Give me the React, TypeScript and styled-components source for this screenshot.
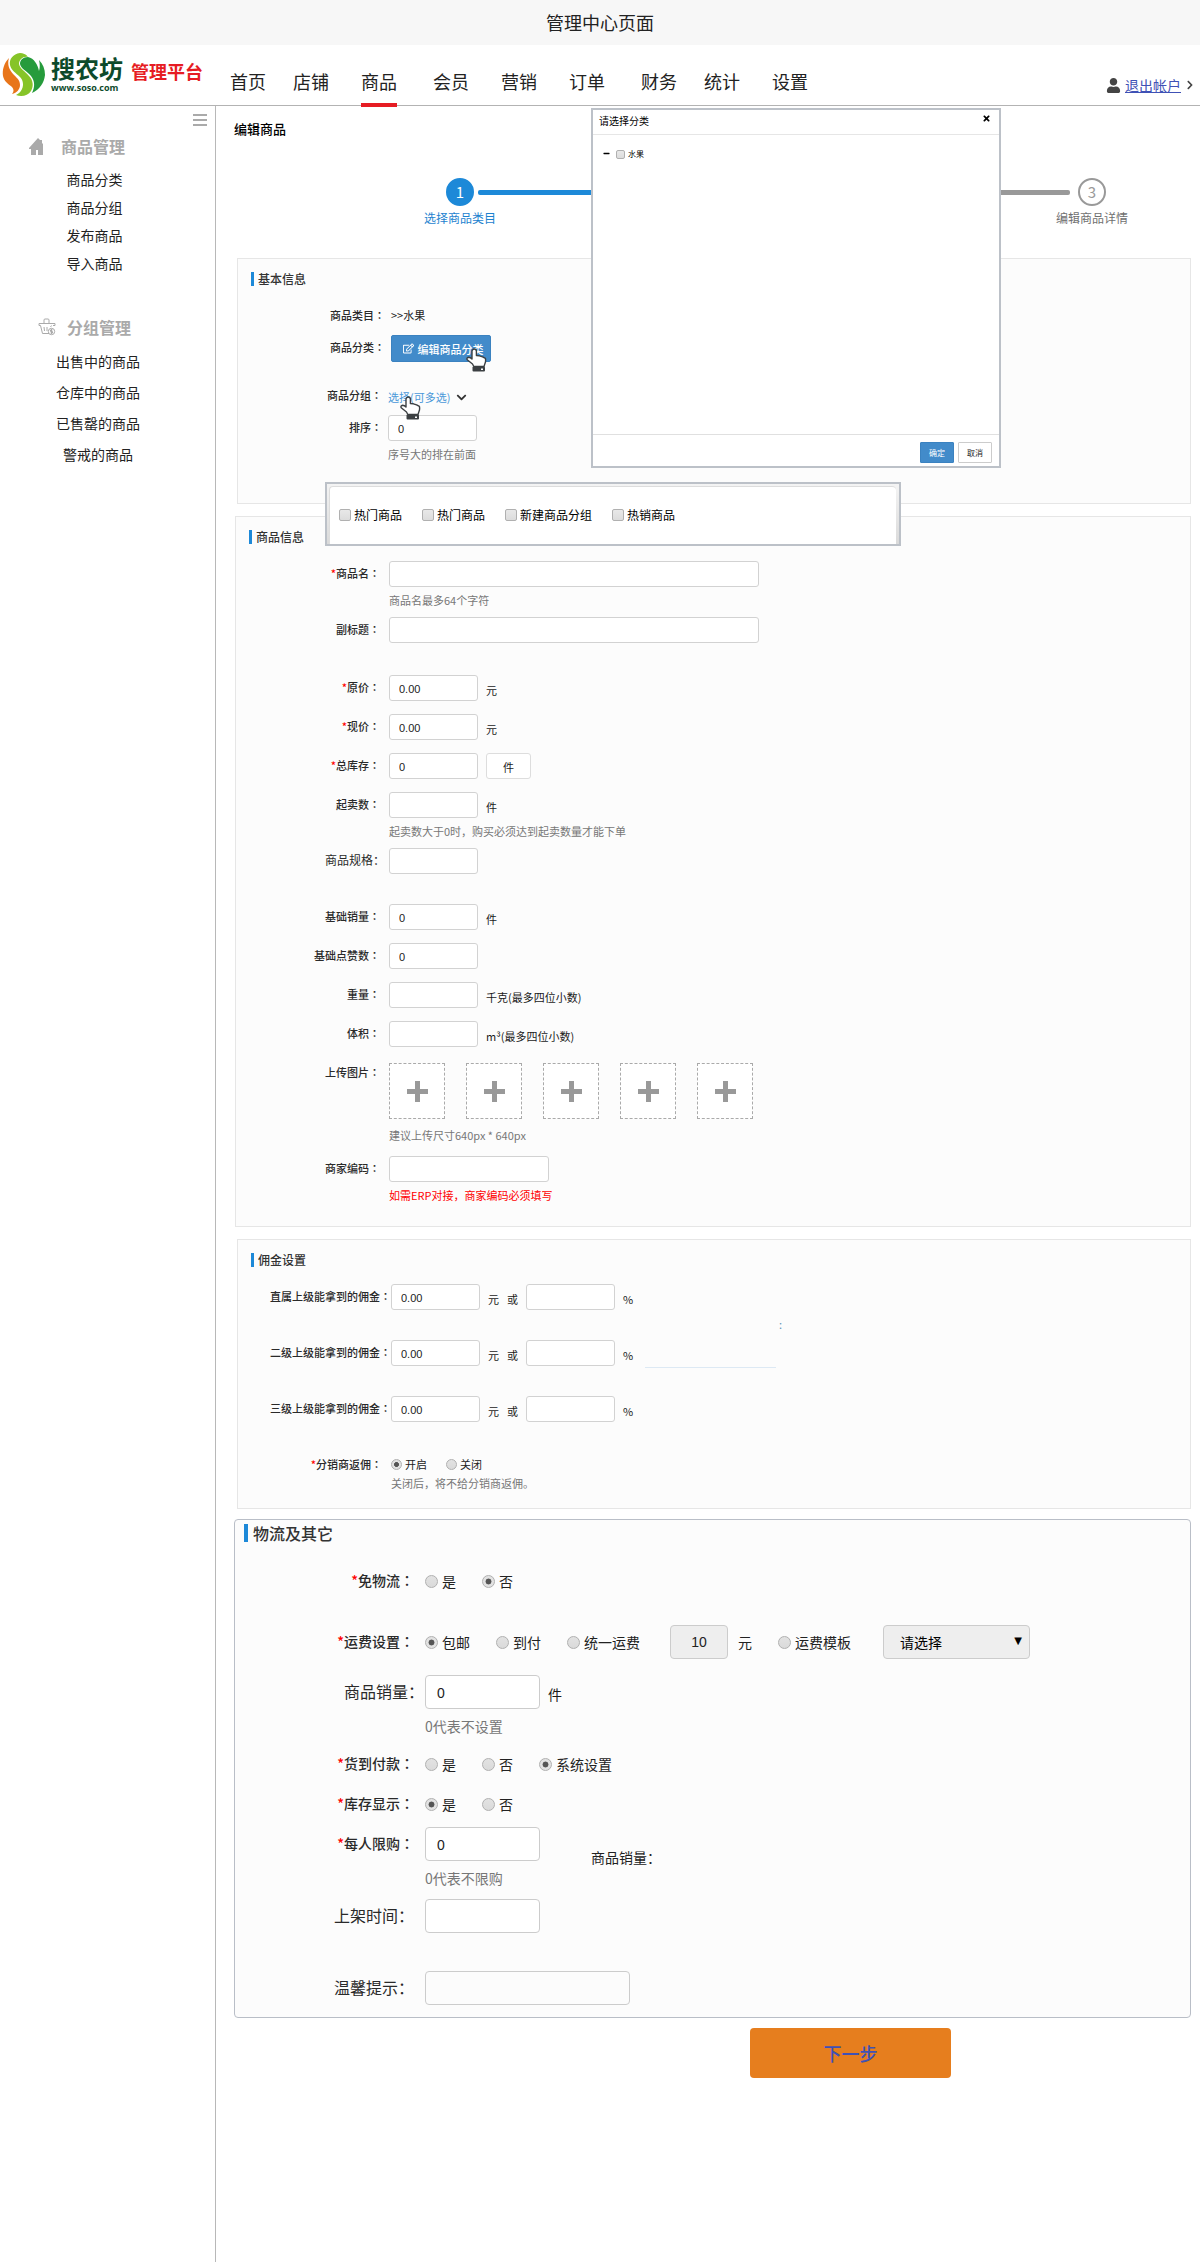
import React, { useId, useState } from "react";
import styled, { createGlobalStyle } from "styled-components";
import { FaChevronDown, FaChevronRight, FaMinus, FaRegEdit, FaTimes, FaUser } from "react-icons/fa";

const GlobalStyle = createGlobalStyle`
  * { box-sizing: border-box; }
  body {
    margin: 0;
    background: #fff;
    color: #222;
    font-family: "Noto Sans CJK SC", sans-serif;
    font-size: 11px;
  }
  button, input, select { font: inherit; color: inherit; margin: 0; }
  h1, h2, ul, p { margin: 0; padding: 0; }
  ul { list-style: none; }
`;

/* ---------- page frame ---------- */

const Page = styled.div`
  display: flex;
  flex-direction: column;
  min-height: 100vh;
`;

const TopBar = styled.div`
  height: 45px;
  line-height: 44px;
  background: #f7f7f7;
  text-align: center;
  font-size: 18px;
`;

const Header = styled.header`
  display: flex;
  height: 61px;
  border-bottom: 1px solid #b3b3b3;
`;

const Brand = styled.a`
  display: flex;
  align-items: flex-start;
  width: 230px;
  padding: 8px 0 0 2px;
  text-decoration: none;
`;

const BrandName = styled.span`
  display: flex;
  flex-direction: column;
  margin-left: 6px;
  color: #0d4a2b;
  font-weight: 700;
`;

const BrandTitle = styled.span`
  font-size: 24px;
  line-height: 30px;
`;

const BrandDomain = styled.span`
  font-family: "Open Sans", sans-serif;
  font-size: 9px;
  line-height: 10px;
`;

const BrandTag = styled.span`
  margin-left: 8px;
  color: #e61c23;
  font-size: 18px;
  font-weight: 700;
  line-height: 36px;
`;

const Nav = styled.nav`
  display: flex;
`;

const NavLink = styled.a<{ $active?: boolean; $space: number }>`
  height: 62px;
  margin-left: ${(p) => p.$space}px;
  padding-top: 22px;
  border-bottom: 4px solid ${(p) => (p.$active ? "#e61c23" : "transparent")};
  color: #222;
  font-size: 18px;
  line-height: 28px;
  text-decoration: none;
`;

const Account = styled.div`
  display: flex;
  align-items: center;
  gap: 4px;
  margin-left: auto;
  padding: 20px 5px 0 0;
  color: #444;
`;

const LogoutLink = styled.a`
  color: #3f51b5;
  font-size: 14px;
  line-height: 20px;
`;

const Body = styled.div`
  display: flex;
  flex: 1;
`;

/* ---------- sidebar ---------- */

const Sidebar = styled.aside`
  flex: none;
  width: 216px;
  border-right: 1px solid #b8b8b8;
`;

const MenuToggle = styled.button`
  display: flex;
  flex-direction: column;
  gap: 3px;
  width: 14px;
  margin: 8px 8px 8px auto;
  padding: 0;
  border: 0;
  background: none;
`;

const ToggleBar = styled.span`
  height: 2px;
  background: #aaa;
`;

const GroupTitle = styled.h2<{ $indent: number; $space: number }>`
  display: flex;
  align-items: center;
  gap: ${(p) => p.$space}px;
  padding-left: ${(p) => p.$indent}px;
  color: #aaa;
  font-size: 16px;
  font-weight: 700;
  line-height: 24px;
`;

const GroupList = styled.ul<{ $pitch: number; $right: number }>`
  padding: 7px ${(p) => p.$right}px 38px 0;
  font-size: 14px;
  line-height: ${(p) => p.$pitch}px;
  text-align: center;
`;

const SideLink = styled.a`
  color: #222;
  text-decoration: none;
`;

/* ---------- content ---------- */

const Main = styled.main`
  position: relative;
  flex: 1;
  min-width: 0;
  padding: 13px 9px 40px 18px;
`;

const PageTitle = styled.h1`
  color: #000;
  font-size: 13px;
  font-weight: 500;
  line-height: 20px;
`;

const Stepper = styled.ol`
  display: flex;
  align-items: flex-start;
  margin: 39px 63px 30px 190px;
  padding: 0;
  list-style: none;
`;

const Step = styled.li<{ $active?: boolean }>`
  display: flex;
  flex-direction: column;
  align-items: center;
  width: 72px;
  color: ${(p) => (p.$active ? "#1d82cf" : "#707070")};
  font-size: 12px;
  line-height: 20px;
`;

const StepDot = styled.span<{ $active?: boolean }>`
  width: 28px;
  height: 28px;
  margin-bottom: 2px;
  border: 2px solid ${(p) => (p.$active ? "#1d89d8" : "#999")};
  border-radius: 50%;
  background: ${(p) => (p.$active ? "#1d89d8" : "#fff")};
  color: ${(p) => (p.$active ? "#fff" : "#999")};
  font-size: 15px;
  line-height: 24px;
  text-align: center;
`;

const StepLine = styled.li<{ $active?: boolean }>`
  flex: 1;
  height: 5px;
  margin: 12px ${(p) => (p.$active ? "0 0 -18px" : "-14px 0 0")};
  border-radius: 2px;
  background: ${(p) => (p.$active ? "#1d89d8" : "#999")};
`;

const Panel = styled.section<{ $left?: number; $bottom?: number }>`
  position: relative;
  margin: 0 0 12px ${(p) => p.$left ?? 3}px;
  padding: 10px 0 ${(p) => p.$bottom ?? 18}px;
  border: 1px solid #e6e6e6;
  background: #fcfcfc;
`;

const PanelTitle = styled.h2`
  display: flex;
  align-items: center;
  gap: 4px;
  margin: 0 0 14px 13px;
  color: #333;
  font-size: 12px;
  font-weight: 500;
  line-height: 20px;

  &::before {
    content: "";
    width: 3px;
    height: 14px;
    background: #1d89d8;
  }
`;

const FramedPanel = styled.section`
  margin-top: -2px;
  padding: 4px 0 12px;
  border: 1px solid #b9bec7;
  border-radius: 4px;
  background: #fcfcfc;
  font-size: 14px;
`;

const FramedTitle = styled(PanelTitle)`
  gap: 5px;
  margin: 0 0 22px 9px;
  font-size: 16px;
  line-height: 18px;

  &::before {
    width: 4px;
    height: 18px;
  }
`;

const Row = styled.div<{ $label?: number; $space?: number; $gap?: number }>`
  display: grid;
  grid-template-columns: ${(p) => p.$label ?? 144}px minmax(0, 1fr);
  column-gap: ${(p) => p.$space ?? 9}px;
  margin-bottom: ${(p) => p.$gap ?? 13}px;
`;

const Label = styled.label<{ $size?: number }>`
  color: #2a2a2a;
  font-size: ${(p) => p.$size ?? 11}px;
  font-weight: ${(p) => (p.$size ? 400 : 500)};
  line-height: 24px;
  text-align: right;
  white-space: nowrap;
`;

const BigLabel = styled(Label)`
  font-size: ${(p) => p.$size ?? 14}px;
  line-height: 32px;
`;

const Star = styled.span`
  color: #f00;
`;

/* The Traditional Chinese face centres the full-width colon in its cell. */
const MidColon = styled.span`
  font-family: "Noto Sans CJK TC", sans-serif;
`;

const Controls = styled.div<{ $height?: number }>`
  display: flex;
  align-items: center;
  gap: 8px;
  min-height: ${(p) => p.$height ?? 26}px;
`;

const TextInput = styled.input<{ $width?: number }>`
  width: ${(p) => p.$width ?? 89}px;
  height: 26px;
  padding: 2px 9px 0;
  border: 1px solid #d2d2d2;
  border-radius: 3px;
  background: #fff;
  color: #222;
  font-family: "Liberation Sans", sans-serif;
  font-size: 11px;
`;

const BigInput = styled(TextInput)<{ $plain?: boolean }>`
  height: 34px;
  padding: 2px 11px 0;
  border-color: #ccc;
  border-radius: 4px;
  background: ${(p) => (p.$plain ? "#fcfcfc" : "#fff")};
  font-size: 14px;
`;

const FeeInput = styled(BigInput)`
  margin: 0 2px 0 22px;
  padding: 0;
  background: #eee;
  text-align: center;
`;

const Unit = styled.span`
  padding-top: 3px;
  color: #1a1a1a;
  line-height: 20px;
`;

const Hint = styled.p<{ $line?: number; $color?: string }>`
  grid-column: 2;
  color: ${(p) => p.$color ?? "#777"};
  line-height: ${(p) => p.$line ?? 26}px;
`;

const UnitButton = styled.button`
  width: 45px;
  height: 26px;
  padding: 2px 0 0;
  border: 1px solid #ddd;
  border-radius: 3px;
  background: #fff;
  line-height: 20px;
`;

const EditButton = styled.button`
  display: flex;
  align-items: center;
  justify-content: center;
  gap: 4px;
  width: 100px;
  height: 27px;
  padding: 0 0 0 4px;
  border: 1px solid #3b82c0;
  border-radius: 2px;
  background: #428bca;
  color: #fff;
  font-weight: 500;
`;

const PickLink = styled.a`
  color: #4a98d9;
  line-height: 20px;
  text-decoration: none;
`;

const PickControls = styled(Controls)`
  gap: 6px;
  padding-top: 4px;
  color: #333;
`;

const Pointed = styled.span`
  position: relative;
  display: inline-flex;
`;

const HandSpot = styled.span<{ $x: number; $y: number }>`
  position: absolute;
  left: ${(p) => p.$x}px;
  top: ${(p) => p.$y}px;
  z-index: 1;
  line-height: 0;
  pointer-events: none;
`;

const Choice = styled.label<{ $space?: number }>`
  display: flex;
  align-items: center;
  gap: ${(p) => p.$space ?? 3}px;
  white-space: nowrap;
`;

const Radio = styled.input<{ $size?: number }>`
  appearance: none;
  width: ${(p) => p.$size ?? 11}px;
  height: ${(p) => p.$size ?? 11}px;
  border: 1px solid #b0b0b0;
  border-radius: 50%;
  background: linear-gradient(#e2e2e2, #dadada);

  &:checked {
    background: radial-gradient(circle, #555 0 34%, #e2e2e2 42%);
  }
`;

const Check = styled.input<{ $size?: number }>`
  appearance: none;
  width: ${(p) => p.$size ?? 12}px;
  height: ${(p) => p.$size ?? 12}px;
  border: 1px solid #b0b0b0;
  border-radius: 2px;
  background: linear-gradient(#e8e8e8, #dcdcdc);

  &:checked {
    background: #428bca;
  }
`;

const Choices = styled(Controls)<{ $between: number }>`
  gap: ${(p) => p.$between}px;
`;

const UploadList = styled.div`
  display: flex;
  gap: 21px;
  padding: 3px 0;
`;

const UploadButton = styled.button`
  display: grid;
  place-items: center;
  width: 56px;
  height: 56px;
  padding: 0;
  border: 1px dashed #aaa;
  background: #fff;
`;

const SideMark = styled.div`
  position: absolute;
  left: 407px;
  top: 77px;
  width: 137px;
  height: 51px;
  color: #5b93b8;
  line-height: 14px;
  text-align: right;

  &::after {
    content: "";
    display: block;
    width: 131px;
    height: 1px;
    margin-top: 36px;
    background: #dde9f4;
  }
`;

const SelectBox = styled.span`
  position: relative;
  margin-left: 24px;
`;

const Select = styled.select`
  appearance: none;
  width: 147px;
  height: 34px;
  padding: 0 16px;
  border: 1px solid #ccc;
  border-radius: 4px;
  background: #eee;
  color: #000;
`;

const SelectArrow = styled.span`
  position: absolute;
  right: 8px;
  top: 6px;
  color: #000;
  font-family: "DejaVu Sans", sans-serif;
  font-size: 10px;
  line-height: 20px;
  pointer-events: none;
`;

const SalesNote = styled.span`
  margin: 26px 0 0 43px;
  line-height: 20px;
`;

const LimitControls = styled(Controls)`
  height: 34px;
`;

const NextButton = styled.button`
  display: block;
  width: 201px;
  height: 50px;
  margin: 10px 0 0 516px;
  border: 0;
  border-radius: 4px;
  background: #e67e1e;
  color: #3f51b5;
  font-size: 18px;
  font-weight: 500;
`;

/* ---------- overlays ---------- */

const Dialog = styled.div`
  position: absolute;
  left: 375px;
  top: 2px;
  z-index: 2;
  display: flex;
  flex-direction: column;
  width: 410px;
  height: 360px;
  border: 2px solid #bcc1c8;
  background: #fff;
  font-size: 8px;
`;

const DialogHead = styled.div`
  display: flex;
  align-items: flex-start;
  justify-content: space-between;
  height: 25px;
  padding: 3px 8px 0 6px;
  border-bottom: 1px solid #e6e6e6;
  color: #000;
  font-size: 10px;
  line-height: 16px;
`;

const CloseButton = styled.button`
  padding: 1px 0 0;
  border: 0;
  background: none;
  line-height: 0;
`;

const DialogBody = styled.div`
  display: flex;
  flex: 1;
  align-items: flex-start;
  gap: 6px;
  padding: 13px 10px;
  color: #000;
  line-height: 12px;
`;

const Collapse = styled.button`
  padding: 2px 0 0;
  border: 0;
  background: none;
  line-height: 0;
`;

const DialogFoot = styled.div`
  display: flex;
  justify-content: flex-end;
  gap: 4px;
  height: 32px;
  padding: 7px 7px 0;
  border-top: 1px solid #e0e0e0;
`;

const DialogButton = styled.button<{ $primary?: boolean }>`
  width: 34px;
  height: 21px;
  padding: 0;
  border: 1px solid ${(p) => (p.$primary ? "#3b82c0" : "#ccc")};
  border-radius: 1px;
  background: ${(p) => (p.$primary ? "#428bca" : "#fff")};
  color: ${(p) => (p.$primary ? "#fff" : "#222")};
`;

const GroupPopup = styled.div`
  position: absolute;
  left: 109px;
  top: 376px;
  z-index: 2;
  width: 576px;
  height: 64px;
  padding: 2px 3px 0 2px;
  border: 2px solid #bcc1c8;
  background: linear-gradient(#f4f4f4, #dadada);
`;

const GroupOptions = styled.div`
  display: flex;
  align-items: center;
  gap: 20px;
  height: 58px;
  padding: 0 9px 2px;
  border-top: 1px solid #ddd;
  border-left: 1px solid #ddd;
  border-radius: 4px 4px 0 0;
  background: #fff;
  color: #000;
  font-size: 12px;
`;

/* ---------- drawings ---------- */

const Logo = () => (
  <svg width="43" height="44" viewBox="0 0 43 44" aria-hidden="true">
    <path d="M7 5C2 10 0 17 1 23c1 5 5 8 9 11 2 2 2 5 0 7 5-1 8-5 8-9 0-5-3-7-6-10C7 17 5 11 7 5z" fill="#e8751a" />
    <path d="M18 0C11 1 7 6 8 12c1 5 6 8 10 12 3 3 4 8 2 12-1 3-4 5-6 6 5 2 12 1 15-4 3-5 2-11-2-15-4-5-9-7-10-12 0-4 4-8 9-7-2-3-5-4-8-4z" fill="#86c428" />
    <path d="M26 4c-5 0-8 3-8 7 1 5 7 7 11 12 4 5 4 11 1 17 8-4 12-10 13-18 0-6-2-11-6-15 1 4 1 8 0 11-1-6-5-13-11-14z" fill="#269b3c" />
  </svg>
);

const HomeIcon = () => (
  <svg width="15" height="17" viewBox="0 0 15 17" aria-hidden="true">
    <path d="M0 10 9 0l2 2h2v3l1 1v11H9v-5H7v5H2v-6H0z" fill="#aaa" />
  </svg>
);

const BasketIcon = () => (
  <svg width="18" height="18" viewBox="0 0 18 18" fill="none" stroke="#aaa" aria-hidden="true">
    <path d="M6 5V2q0-1 1-1h3q1 0 1 1v3M1 5.500h16M1 5.500v2h1.500L4.500 15.500H11M17 5.500v2h-2M6 9l.5 4M9 9v4" />
    <circle cx="13.500" cy="13.500" r="3.200" />
    <path d="M14.500 12h-2v1.500h2V15h-2M13.500 11v5M12.500 9l1-1.500" />
  </svg>
);

const HandIcon = () => (
  <svg width="21" height="24" viewBox="0 0 21 24" aria-hidden="true">
    <path
      d="M6 11V3.200a2.200 2.200 0 0 1 4.400 0V7.500l3 .3 3.200 1 2.800 1.600q.6 2.800-.4 5L18 18.500H7.800L6.500 16 1.200 11.800Q.3 9.600 2.600 9.300 4.600 9.500 6 11z"
      fill="#fff"
      stroke="#3c4043"
      strokeWidth="1.400"
      strokeLinejoin="round"
    />
    <rect x="6.500" y="18.500" width="12.500" height="5" rx="1" fill="#3c4043" />
    <rect x="15" y="20.500" width="2" height="1.500" fill="#fff" />
  </svg>
);

const PlusIcon = () => (
  <svg width="21" height="21" viewBox="0 0 21 21" aria-hidden="true">
    <path d="M8 0h5v8h8v5h-8v8H8v-8H0V8h8z" fill="#999" />
  </svg>
);

/* ---------- form parts ---------- */

type FieldProps = {
  label: string;
  required?: boolean;
  value?: string;
  width?: number;
  unit?: React.ReactNode;
  hint?: string;
  hintColor?: string;
  gap?: number;
  labelWidth?: number;
  space?: number;
  labelSize?: number;
};

function Field({ label, required, value = "", width, unit, hint, hintColor, gap, labelWidth, space, labelSize }: FieldProps) {
  const id = useId();
  return (
    <Row $gap={gap ?? (hint ? 4 : 13)} $label={labelWidth} $space={space}>
      <Label htmlFor={id} $size={labelSize}>
        {required && <Star>*</Star>}
        {label}
        {labelSize ? "：" : <MidColon>：</MidColon>}
      </Label>
      <Controls>
        <TextInput id={id} defaultValue={value} $width={width} />
        {typeof unit === "string" ? <Unit>{unit}</Unit> : unit}
      </Controls>
      {hint && <Hint $color={hintColor}>{hint}</Hint>}
    </Row>
  );
}

function CommissionRow({ level }: { level: string }) {
  const id = useId();
  return (
    <Row $label={153} $space={0} $gap={30}>
      <Label htmlFor={id}>
        {level}上级能拿到的佣金<MidColon>：</MidColon>
      </Label>
      <Controls>
        <TextInput id={id} defaultValue="0.00" />
        <Unit>元</Unit>
        <Unit>或</Unit>
        <TextInput aria-label={`${level}上级佣金比例`} />
        <Unit>%</Unit>
      </Controls>
    </Row>
  );
}

type RadioSetProps = {
  name: string;
  options: string[];
  initial: string;
  between: number;
  size?: number;
};

function RadioSet({ name, options, initial, between, size }: RadioSetProps) {
  const [value, setValue] = useState(initial);
  return (
    <Choices $between={between} $height={size ? 34 : 24} role="radiogroup" aria-label={name}>
      {options.map((option) => (
        <Choice key={option} $space={size ? 4 : 3}>
          <Radio type="radio" name={name} $size={size} checked={value === option} onChange={() => setValue(option)} />
          {option}
        </Choice>
      ))}
    </Choices>
  );
}

const navItems: { text: string; space: number; active?: boolean }[] = [
  { text: "首页", space: 0 },
  { text: "店铺", space: 27 },
  { text: "商品", space: 32, active: true },
  { text: "会员", space: 36 },
  { text: "营销", space: 32 },
  { text: "订单", space: 32 },
  { text: "财务", space: 36 },
  { text: "统计", space: 27 },
  { text: "设置", space: 32 },
];

const productLinks = ["商品分类", "商品分组", "发布商品", "导入商品"];
const groupLinks = ["出售中的商品", "仓库中的商品", "已售罄的商品", "警戒的商品"];
const groupOptions = ["热门商品", "热门商品", "新建商品分组", "热销商品"];

function SideGroup({ links, pitch, right }: { links: string[]; pitch: number; right: number }) {
  return (
    <GroupList $pitch={pitch} $right={right}>
      {links.map((text) => (
        <li key={text}>
          <SideLink href="#">{text}</SideLink>
        </li>
      ))}
    </GroupList>
  );
}

function CategoryDialog() {
  return (
    <Dialog role="dialog" aria-label="请选择分类">
      <DialogHead>
        <span>请选择分类</span>
        <CloseButton type="button" aria-label="关闭">
          <FaTimes size={9} />
        </CloseButton>
      </DialogHead>
      <DialogBody>
        <Collapse type="button" aria-label="收起">
          <FaMinus size={7} />
        </Collapse>
        <Choice>
          <Check type="checkbox" $size={9} />
          水果
        </Choice>
      </DialogBody>
      <DialogFoot>
        <DialogButton type="button" $primary>
          确定
        </DialogButton>
        <DialogButton type="button">取消</DialogButton>
      </DialogFoot>
    </Dialog>
  );
}

function BasicPanel() {
  return (
    <Panel $bottom={36}>
      <PanelTitle>基本信息</PanelTitle>
      <Row $label={147} $space={6} $gap={8}>
        <Label as="span">
          商品类目<MidColon>：</MidColon>
        </Label>
        <Controls $height={24}>&gt;&gt;水果</Controls>
      </Row>
      <Row $label={147} $space={6} $gap={21}>
        <Label as="span">
          商品分类<MidColon>：</MidColon>
        </Label>
        <Controls>
          <Pointed>
            <EditButton type="button">
              <FaRegEdit size={11} />
              编辑商品分类
            </EditButton>
            <HandSpot $x={75} $y={13}>
              <HandIcon />
            </HandSpot>
          </Pointed>
        </Controls>
      </Row>
      <Row $space={6} $gap={8}>
        <Label as="span">
          商品分组<MidColon>：</MidColon>
        </Label>
        <PickControls $height={24}>
          <Pointed>
            <PickLink href="#">选择(可多选)</PickLink>
            <HandSpot $x={12} $y={9}>
              <HandIcon />
            </HandSpot>
          </Pointed>
          <FaChevronDown size={11} />
        </PickControls>
      </Row>
      <Field label="排序" value="0" hint="序号大的排在前面" space={6} gap={0} />
    </Panel>
  );
}

function ProductPanel() {
  return (
    <Panel $left={1}>
      <PanelTitle>商品信息</PanelTitle>
      <Field label="商品名" required width={370} hint="商品名最多64个字符" />
      <Field label="副标题" width={370} gap={32} />
      <Field label="原价" required value="0.00" unit="元" />
      <Field label="现价" required value="0.00" unit="元" />
      <Field label="总库存" required value="0" unit={<UnitButton type="button">件</UnitButton>} />
      <Field label="起卖数" unit="件" hint="起卖数大于0时，购买必须达到起卖数量才能下单" />
      <Field label="商品规格" labelSize={12} labelWidth={149} space={4} gap={30} />
      <Field label="基础销量" value="0" unit="件" />
      <Field label="基础点赞数" value="0" />
      <Field label="重量" unit="千克(最多四位小数)" />
      <Field label="体积" unit="m³(最多四位小数)" />
      <Row $gap={8}>
        <Label as="span">
          上传图片<MidColon>：</MidColon>
        </Label>
        <UploadList>
          {[1, 2, 3, 4, 5].map((n) => (
            <UploadButton key={n} type="button" aria-label={`上传图片${n}`}>
              <PlusIcon />
            </UploadButton>
          ))}
        </UploadList>
        <Hint>建议上传尺寸640px * 640px</Hint>
      </Row>
      <Field label="商家编码" width={160} hint="如需ERP对接，商家编码必须填写" hintColor="#f00" gap={0} />
    </Panel>
  );
}

function CommissionPanel() {
  return (
    <Panel>
      <PanelTitle>佣金设置</PanelTitle>
      <CommissionRow level="直属" />
      <CommissionRow level="二级" />
      <CommissionRow level="三级" />
      <SideMark>:</SideMark>
      <Row $gap={0}>
        <Label as="span">
          <Star>*</Star>分销商返佣<MidColon>：</MidColon>
        </Label>
        <RadioSet name="分销商返佣" options={["开启", "关闭"]} initial="开启" between={19} />
        <Hint $line={14}>关闭后，将不给分销商返佣。</Hint>
      </Row>
    </Panel>
  );
}

function ShippingOptions() {
  const [mode, setMode] = useState("包邮");
  const option = (text: string) => (
    <Choice $space={4}>
      <Radio type="radio" name="运费设置" $size={13} checked={mode === text} onChange={() => setMode(text)} />
      {text}
    </Choice>
  );
  return (
    <Controls $height={34}>
      <Choices $between={26}>
        {option("包邮")}
        {option("到付")}
        {option("统一运费")}
      </Choices>
      <FeeInput $width={58} defaultValue="10" aria-label="统一运费金额" />
      <Choices $between={26}>
        <span>元</span>
        {option("运费模板")}
      </Choices>
      <SelectBox>
        <Select aria-label="运费模板选择">
          <option>请选择</option>
        </Select>
        <SelectArrow aria-hidden="true">▼</SelectArrow>
      </SelectBox>
    </Controls>
  );
}

function LogisticsPanel() {
  return (
    <FramedPanel>
      <FramedTitle>物流及其它</FramedTitle>
      <Row $label={179} $space={11} $gap={27}>
        <BigLabel as="span">
          <Star>*</Star>免物流<MidColon>：</MidColon>
        </BigLabel>
        <RadioSet name="免物流" options={["是", "否"]} initial="否" between={26} size={13} />
      </Row>
      <Row $label={179} $space={11} $gap={16}>
        <BigLabel as="span">
          <Star>*</Star>运费设置<MidColon>：</MidColon>
        </BigLabel>
        <ShippingOptions />
      </Row>
      <Row $label={189} $space={1} $gap={4}>
        <BigLabel $size={16} htmlFor="sales">
          商品销量：
        </BigLabel>
        <Controls $height={34}>
          <BigInput id="sales" $width={115} defaultValue="0" />
          <Unit>件</Unit>
        </Controls>
        <Hint $line={34}>0代表不设置</Hint>
      </Row>
      <Row $label={179} $space={11} $gap={6}>
        <BigLabel as="span">
          <Star>*</Star>货到付款<MidColon>：</MidColon>
        </BigLabel>
        <RadioSet name="货到付款" options={["是", "否", "系统设置"]} initial="系统设置" between={26} size={13} />
      </Row>
      <Row $label={179} $space={11} $gap={6}>
        <BigLabel as="span">
          <Star>*</Star>库存显示<MidColon>：</MidColon>
        </BigLabel>
        <RadioSet name="库存显示" options={["是", "否"]} initial="是" between={26} size={13} />
      </Row>
      <Row $label={179} $space={11} $gap={4}>
        <BigLabel htmlFor="limit">
          <Star>*</Star>每人限购<MidColon>：</MidColon>
        </BigLabel>
        <LimitControls>
          <BigInput id="limit" $width={115} defaultValue="0" />
          <SalesNote>商品销量：</SalesNote>
        </LimitControls>
        <Hint $line={34}>0代表不限购</Hint>
      </Row>
      <Row $label={179} $space={11} $gap={38}>
        <BigLabel $size={16} htmlFor="listed">
          上架时间：
        </BigLabel>
        <BigInput id="listed" $width={115} />
      </Row>
      <Row $label={179} $space={11} $gap={0}>
        <BigLabel $size={16} htmlFor="tips">
          温馨提示：
        </BigLabel>
        <BigInput id="tips" $width={205} $plain />
      </Row>
    </FramedPanel>
  );
}

export default function App() {
  return (
    <Page>
      <GlobalStyle />
      <TopBar>管理中心页面</TopBar>
      <Header>
        <Brand href="#">
          <Logo />
          <BrandName>
            <BrandTitle>搜农坊</BrandTitle>
            <BrandDomain>www.soso.com</BrandDomain>
          </BrandName>
          <BrandTag>管理平台</BrandTag>
        </Brand>
        <Nav>
          {navItems.map((item) => (
            <NavLink key={item.text} href="#" $space={item.space} $active={item.active}>
              {item.text}
            </NavLink>
          ))}
        </Nav>
        <Account>
          <FaUser size={15} />
          <LogoutLink href="#">退出帐户</LogoutLink>
          <FaChevronRight size={10} />
        </Account>
      </Header>
      <Body>
        <Sidebar>
          <MenuToggle type="button" aria-label="收起菜单">
            <ToggleBar />
            <ToggleBar />
            <ToggleBar />
          </MenuToggle>
          <GroupTitle $indent={29} $space={17}>
            <HomeIcon />
            商品管理
          </GroupTitle>
          <SideGroup links={productLinks} pitch={28} right={26} />
          <GroupTitle $indent={38} $space={11}>
            <BasketIcon />
            分组管理
          </GroupTitle>
          <SideGroup links={groupLinks} pitch={31} right={19} />
        </Sidebar>
        <Main>
          <PageTitle>编辑商品</PageTitle>
          <Stepper>
            <Step $active>
              <StepDot $active>1</StepDot>
              选择商品类目
            </Step>
            <StepLine $active />
            <StepLine />
            <Step>
              <StepDot>3</StepDot>
              编辑商品详情
            </Step>
          </Stepper>
          <BasicPanel />
          <ProductPanel />
          <CommissionPanel />
          <LogisticsPanel />
          <NextButton type="button">下一步</NextButton>
          <CategoryDialog />
          <GroupPopup>
            <GroupOptions>
              {groupOptions.map((text, i) => (
                <Choice key={i}>
                  <Check type="checkbox" />
                  {text}
                </Choice>
              ))}
            </GroupOptions>
          </GroupPopup>
        </Main>
      </Body>
    </Page>
  );
}
